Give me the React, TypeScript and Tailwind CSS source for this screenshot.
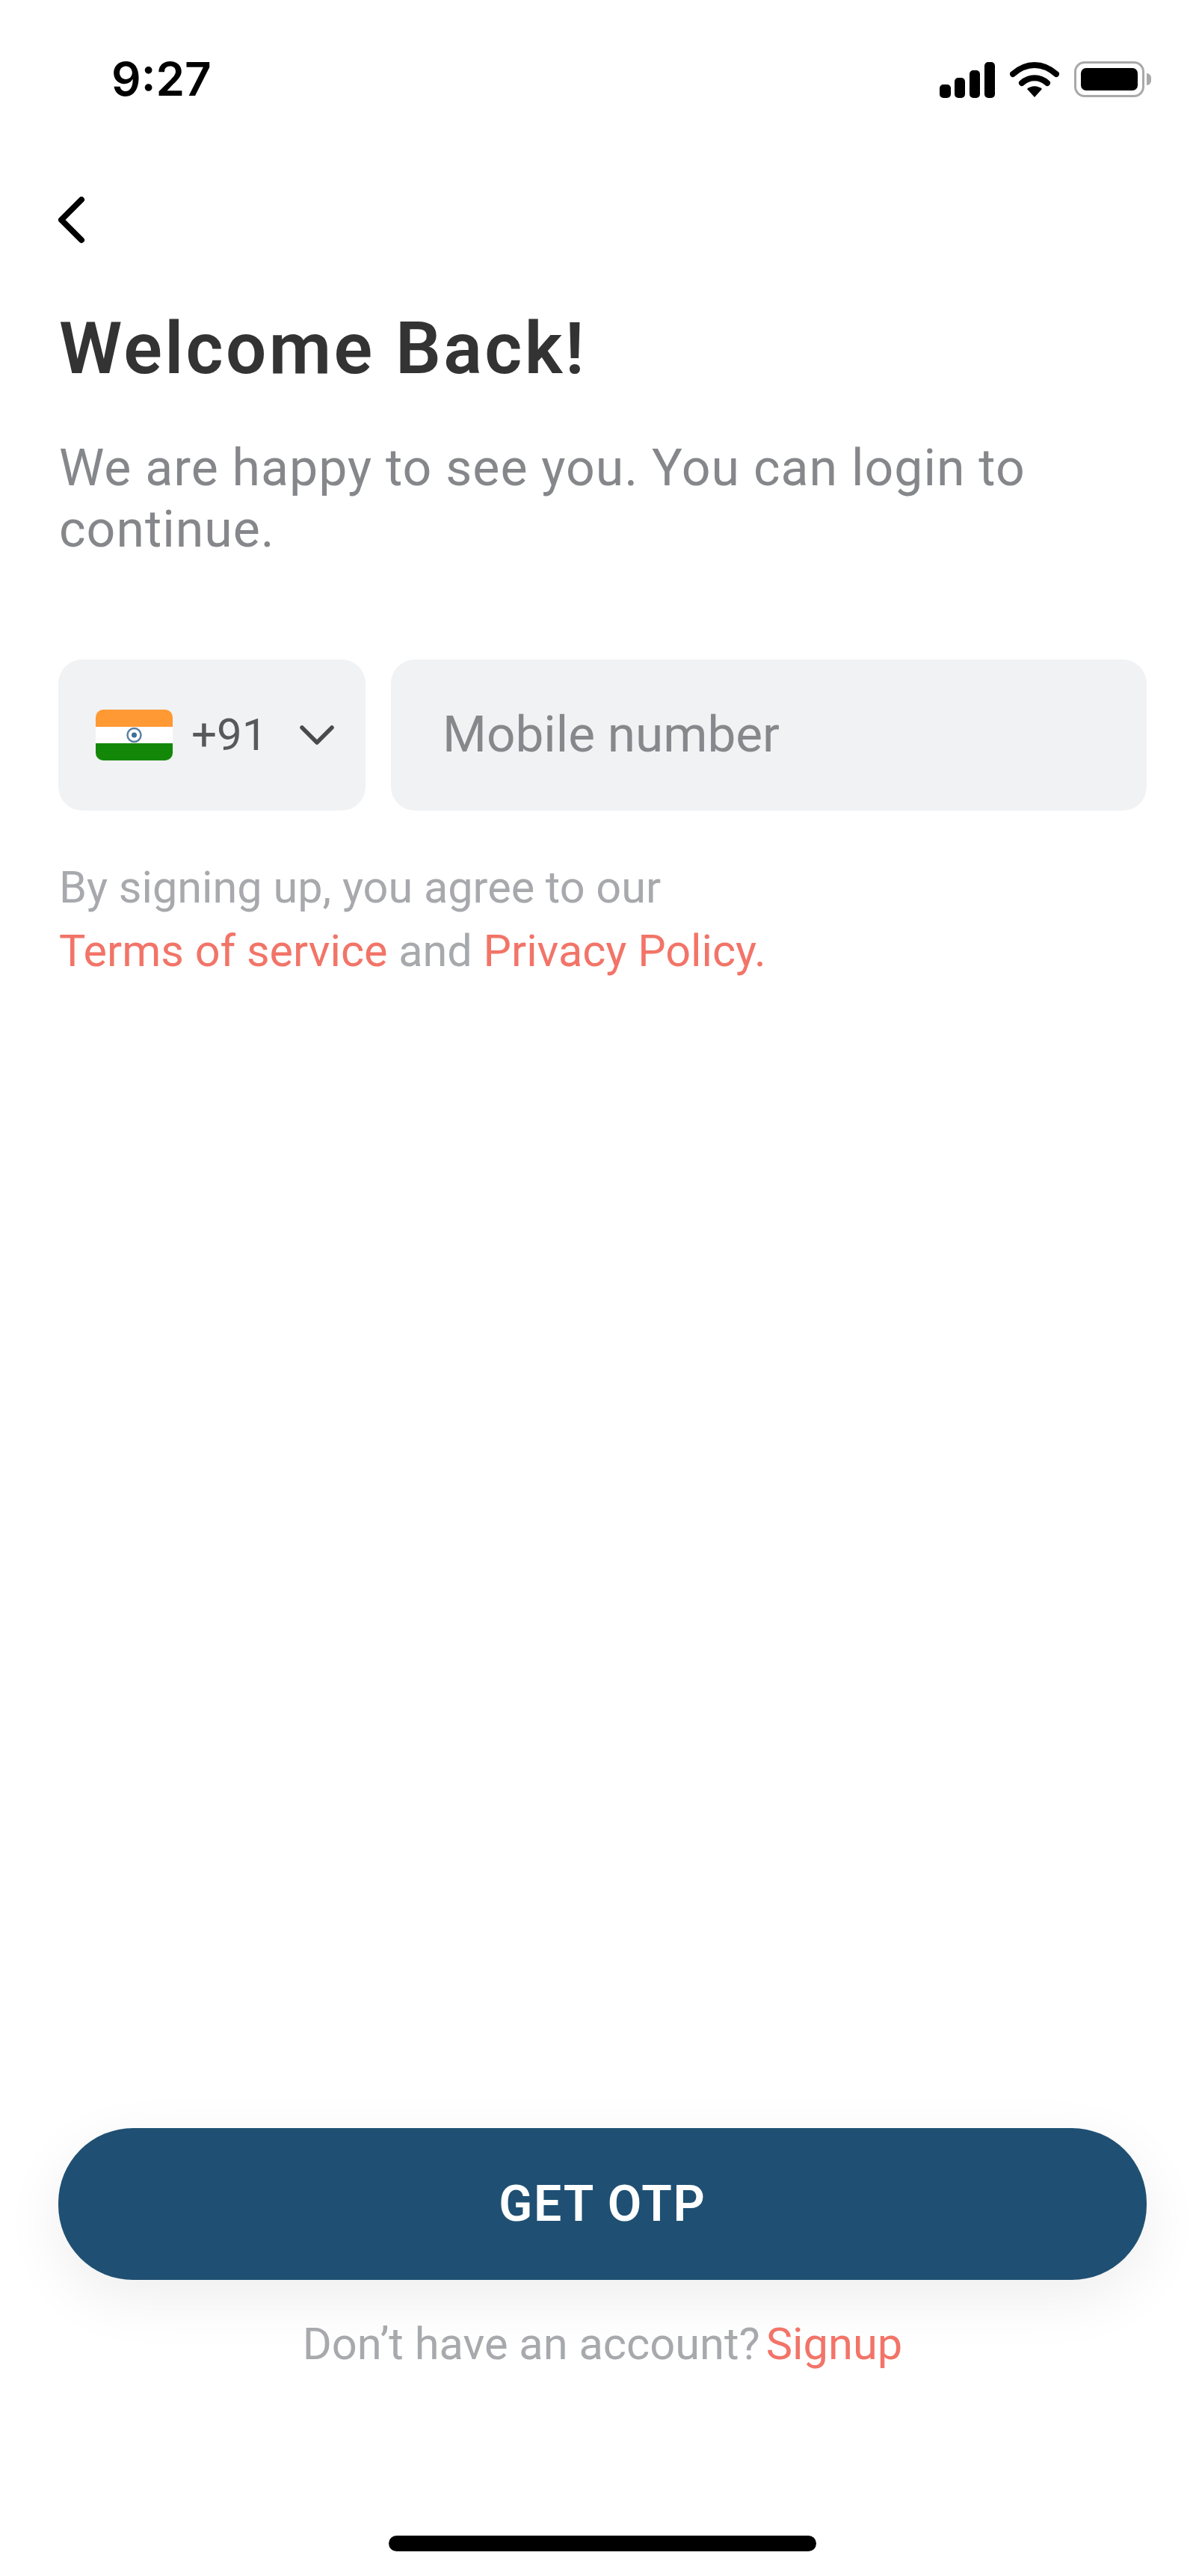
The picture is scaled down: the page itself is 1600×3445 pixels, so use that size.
export default function App() {
  return (
    <div className="w-[1600px] h-[3445px] bg-white flex flex-col overflow-hidden font-['Roboto',sans-serif]">
      <div className="h-[220px] pl-[149px] pr-[60px] flex items-start justify-between pt-[70px]">
        <span className="font-['Inter',sans-serif] font-semibold text-[62px] leading-[72px] text-black">9:27</span>
        <div className="flex items-start gap-[20px] pt-[12px]">
          <svg width="74" height="48" viewBox="0 0 74 48" className="mt-[1px]">
            <rect x="0" y="30" width="15" height="18" rx="5" fill="#000" />
            <rect x="20" y="21" width="14" height="27" rx="5" fill="#000" />
            <rect x="40" y="11" width="14" height="37" rx="5" fill="#000" />
            <rect x="60" y="0" width="14" height="48" rx="5" fill="#000" />
          </svg>
          <svg width="66" height="48" viewBox="0 0 66 48">
            <path d="M4 17C22 1 44 1 62 17" fill="none" stroke="#000" strokeWidth="8" strokeLinecap="round" />
            <path d="M16 29C26 20 40 20 50 29" fill="none" stroke="#000" strokeWidth="8" strokeLinecap="round" />
            <path d="M23 37C29 32 37 32 43 37L33 48Z" fill="#000" />
          </svg>
          <div className="flex items-center gap-[3px]">
            <div className="w-[94px] h-[48px] rounded-[14px] border-[3px] border-[#a9a9a9] p-[6px] flex">
              <div className="flex-1 rounded-[7px] bg-black" />
            </div>
            <div className="w-[6px] h-[16px] rounded-r-full bg-[#a9a9a9]" />
          </div>
        </div>
      </div>

      <div className="pl-[78px] mt-[43px] h-[66px]">
        <svg width="36" height="64" viewBox="0 0 36 64">
          <path d="M31 4L4 31L31 58" fill="none" stroke="#000" strokeWidth="8" strokeLinecap="round" strokeLinejoin="round" />
        </svg>
      </div>

      <h1 className="mt-[82px] pl-[79px] font-['Roboto',sans-serif] font-semibold text-[96px] leading-[110px] tracking-[3.4px] text-[#333333]">
        Welcome Back!
      </h1>

      <p className="mt-[64px] pl-[79px] w-[1400px] text-[68px] leading-[82px] tracking-[1px] text-[#85878a]">
        We are happy to see you. You can login to continue.
      </p>

      <div className="mt-[133px] pl-[78px] pr-[66px] flex gap-[34px] h-[202px]">
        <div className="w-[411px] rounded-[32px] bg-[#f1f2f4] flex items-center pl-[50px]">
          <svg width="103" height="68" viewBox="0 0 103 68" className="shrink-0">
            <defs>
              <clipPath id="flagClip">
                <rect width="103" height="68" rx="10" />
              </clipPath>
            </defs>
            <g clipPath="url(#flagClip)">
              <rect width="103" height="23" fill="#ff9933" />
              <rect y="23" width="103" height="22" fill="#ffffff" />
              <rect y="45" width="103" height="23" fill="#138808" />
            </g>
            <circle cx="51.5" cy="34" r="9" fill="none" stroke="#5d7f9e" strokeWidth="2.5" />
            <circle cx="51.5" cy="34" r="3.5" fill="#3f6f96" />
          </svg>
          <span className="ml-[25px] text-[60px] leading-[70px] text-[#58595b]">+91</span>
          <svg width="46" height="28" viewBox="0 0 46 28" className="ml-[44px]">
            <path d="M3 4L23 24L43 4" fill="none" stroke="#4a4a4a" strokeWidth="5.5" strokeLinecap="round" strokeLinejoin="round" />
          </svg>
        </div>
        <div className="flex-1 rounded-[32px] bg-[#f1f2f4] flex items-center pl-[69px] pb-[2px]">
          <span className="text-[67.5px] leading-[76px] text-[#86888c]">Mobile number</span>
        </div>
      </div>

      <div className="mt-[61px] pl-[79px] text-[59.4px] leading-[85px] text-[#a7a9ac]">
        <div>By signing up, you agree to our</div>
        <div>
          <span className="text-[#f27468]">Terms of service</span> and <span className="text-[#f27468]">Privacy Policy.</span>
        </div>
      </div>

      <div className="mt-auto pl-[78px] pr-[66px]">
        <div className="h-[203px] rounded-[100px] bg-[#1f5073] shadow-[0_24px_80px_rgba(0,0,0,0.07)] flex items-center justify-center">
          <span className="font-semibold text-[66px] leading-[76px] tracking-[1.8px] text-white">GET OTP</span>
        </div>
        <div className="mt-[48px] flex justify-center gap-[8px] text-[59.6px] leading-[76px] text-[#a7a9ac]">
          <span>Don’t have an account?</span>
          <span className="text-[#f27468]">Signup</span>
        </div>
        <div className="mt-[218px] mb-[33px] flex justify-center">
          <div className="w-[572px] h-[21px] rounded-full bg-black" />
        </div>
      </div>
    </div>
  );
}
